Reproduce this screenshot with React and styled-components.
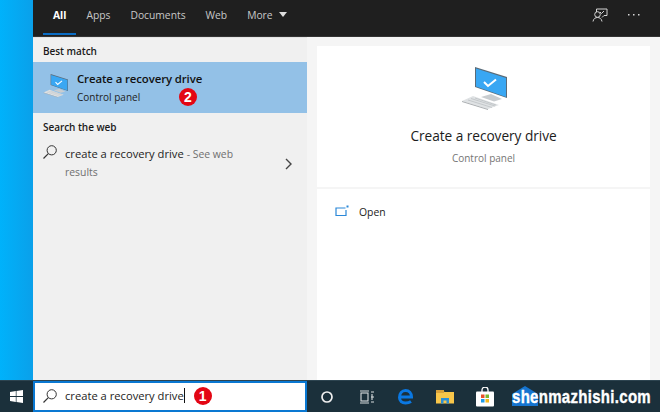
import React from "react";
import styled, { createGlobalStyle } from "styled-components";

const Global = createGlobalStyle`
  html, body { margin: 0; padding: 0; }
  body { font-family: "Open Sans", "Noto Sans", sans-serif; }
  * { box-sizing: border-box; }
`;

const Page = styled.div`
  width: 660px; height: 412px; overflow: hidden;
  display: flex; flex-direction: column;
`;
const Upper = styled.div`
  flex: 1; min-height: 0; display: flex;
`;
const Wallpaper = styled.div`
  width: 33px; background: linear-gradient(90deg, #00b2fb, #0aa0ea);
`;
const Flyout = styled.div`
  flex: 1; display: flex; flex-direction: column; min-width: 0;
`;
const TopBar = styled.div`
  height: 37px; background: #1f1f1f; border-bottom: 1px solid #333;
  display: flex; align-items: stretch; padding: 0 10px;
`;
const Tab = styled.div`
  position: relative; padding: 0 10px 7px; display: flex; align-items: center; gap: 6px;
  height: 36px;
  font-size: 10.3px;
  color: ${p => (p.$active ? "#fff" : "#c8c8c8")};
  font-weight: ${p => (p.$active ? 700 : 400)};
  &::after {
    content: ""; position: absolute; left: 0; right: 0; bottom: 1px; height: 2px;
    background: ${p => (p.$active ? "#0a6cc4" : "transparent")};
  }
`;
const TopActions = styled.div`
  margin-left: auto; display: flex; align-items: center; gap: 20px; padding: 0 10px 7px 0;
`;
const Body = styled.div`
  flex: 1; min-height: 0; display: flex; background: #f5f5f5;
`;
const ResultsPane = styled.div`
  width: 274px; background: #f0f0f0; display: flex; flex-direction: column;
  border-top: 1px solid #e4e4e4;
`;
const SectionLabel = styled.div`
  height: 24px; padding: 1px 0 0 10px; display: flex; align-items: center;
  font-size: 10px; font-weight: 600; color: #1a1a1a; letter-spacing: -0.05px;
`;
const BestMatch = styled.div`
  height: 51px; background: #93c1e7; display: flex; align-items: center;
  padding-left: 10px; gap: 9px; margin-bottom: 1px;
`;
const BestMatchIcon = styled.div`
  display: flex; margin-bottom: 4px;
`;
const ResultTitle = styled.div`
  font-size: 11.4px; font-weight: 600; color: #111; line-height: 16px; letter-spacing: -0.1px;
`;
const ResultSub = styled.div`
  position: relative; font-size: 10px; color: #222; line-height: 14px; margin-top: 3px;
  display: flex; align-items: center;
`;
const Marker = styled.span`
  width: 18px; height: 18px; border-radius: 50%; background: #e30613; color: #fff;
  display: inline-flex; align-items: center; justify-content: center;
  font: 700 14px "Liberation Sans", sans-serif; flex: none;
`;
const FloatMarker = styled(Marker)`
  position: absolute; left: 102px; top: -2px;
`;
const WebRow = styled.div`
  display: flex; padding: 6px 10px 0 9px; gap: 7px; align-items: flex-start;
`;
const WebText = styled.div`
  width: 190px; font-size: 11.2px; line-height: 17px; color: #222;
  padding-top: 1px;
`;
const Hint = styled.span`
  font-size: 10.4px; color: #6f6f6f;
`;
const Chevron = styled.div`
  margin: 9px 0 0 23px;
`;
const DetailPane = styled.div`
  flex: 1; padding: 9px 10px 0; display: flex; flex-direction: column;
`;
const DetailHead = styled.div`
  height: 141px; background: #fff; display: flex; flex-direction: column; align-items: center;
  padding-top: 19px;
`;
const DetailTitle = styled.div`
  font-size: 13.7px; color: #1c1c1c; line-height: 18px; margin-top: 16px; letter-spacing: -0.05px;
`;
const DetailSub = styled.div`
  font-size: 10px; color: #757575; line-height: 14px; margin-top: 6px;
`;
const DetailActions = styled.div`
  flex: 1; margin-top: 2px; background: #fff; padding: 16px 0 0 18px;
  display: flex; gap: 10px; align-items: flex-start; font-size: 10.4px; color: #222;
  line-height: 14px;
`;
const Taskbar = styled.div`
  height: 32px; background: #1b303b; border-top: 1px solid #2d4450; display: flex; align-items: stretch;
  position: relative;
`;
const StartButton = styled.div`
  width: 33px; display: flex; align-items: center; justify-content: center;
`;
const SearchBox = styled.div`
  width: 274px; background: #fff; border: 2px solid #0a78d2; display: flex; align-items: center;
  padding: 0 0 2px 7px; gap: 7px; font-size: 11.200px; color: #222;
`;
const Caret = styled.span`
  width: 1px; height: 15px; background: #111; margin-left: -7px; flex: none;
`;
const BoxMarker = styled(Marker)`
  margin-left: 2px;
`;
const TrayIcons = styled.div`
  display: flex; align-items: center;
`;
const TraySlot = styled.div`
  width: 39.500px; display: flex; align-items: center; justify-content: center;
`;
const Watermark = styled.div`
  position: absolute; left: 512px; top: 4px; height: 24px; width: 140px;
  font: 700 15px/24px "Liberation Sans", sans-serif; color: #fff; letter-spacing: 0.3px;
  white-space: nowrap;
`;
const WatermarkRoof = styled.svg`
  position: absolute; left: 0; top: 1px; z-index: 0;
`;
const WatermarkText = styled.span`
  position: relative; z-index: 1; display: inline-block; transform: scaleY(1.25);
  -webkit-text-stroke: 0.3px #fff;
`;

const PcIcon = ({ size }) => (
  <svg width={size} height={size} viewBox="0 0 46 46">
    <polygon points="1,36 12,31 38,40 27,44" fill="#dfe2e4" />
    <path d="M7 35 L31 42.500 M10 33.500 L34 41 M14 33 L35 40" stroke="#b9bdc0" strokeWidth="0.700" fill="none" />
    <polygon points="1,36 27,44 27,45 1,37" fill="#a9adb0" />
    <polygon points="20,32 30,29 41,34 33,36.500" fill="#c9cdd0" />
    <polygon points="14,2 46,12 46,33 14,22" fill="#5a6b78" />
    <polygon points="15,3.500 45,13 45,32 15,21.500" fill="#39a7f3" />
    <polyline points="23,17 27,21 35,14.500" fill="none" stroke="#fff" strokeWidth="2" />
  </svg>
);
const Magnifier = ({ color = "#333" }) => (
  <svg width="16" height="16" viewBox="0 0 16 16" fill="none" stroke={color} strokeWidth="1">
    <circle cx="9.700" cy="6.300" r="4.600" />
    <line x1="6.300" y1="9.700" x2="1.500" y2="14.500" strokeWidth="1.200" />
  </svg>
);

export default function App() {
  return (
    <Page>
      <Global />
      <Upper>
        <Wallpaper />
        <Flyout>
          <TopBar>
            <Tab $active>All</Tab>
            <Tab>Apps</Tab>
            <Tab>Documents</Tab>
            <Tab>Web</Tab>
            <Tab>
              More
              <svg width="8" height="5" viewBox="0 0 8 5"><polygon points="0,0 8,0 4,5" fill="#ddd" /></svg>
            </Tab>
            <TopActions>
              <svg width="16" height="14" viewBox="0 0 16 14" fill="none" stroke="#d5d5d5" strokeWidth="1">
                <path d="M4.500 4 V1 H15 V7.500 H12 L10 9.500" />
                <circle cx="5.500" cy="6.500" r="2.800" />
                <path d="M1 13.500 C1.500 10.500 3.500 9.500 5.500 9.500 C7.500 9.500 9.500 10.500 10 13.500" />
                <path d="M8 4 L9.500 5.500 L12 3" />
              </svg>
              <svg width="12" height="2" viewBox="0 0 12 2" fill="#d5d5d5">
                <rect x="0" width="1.500" height="1.500" />
                <rect x="5" width="1.500" height="1.500" />
                <rect x="10" width="1.500" height="1.500" />
              </svg>
            </TopActions>
          </TopBar>
          <Body>
            <ResultsPane>
              <SectionLabel>Best match</SectionLabel>
              <BestMatch>
                <BestMatchIcon>
                  <PcIcon size={25} />
                </BestMatchIcon>
                <div>
                  <ResultTitle>Create a recovery drive</ResultTitle>
                  <ResultSub>
                    Control panel
                    <FloatMarker>2</FloatMarker>
                  </ResultSub>
                </div>
              </BestMatch>
              <SectionLabel>Search the web</SectionLabel>
              <WebRow>
                <Magnifier />
                <WebText>
                  create a recovery drive <Hint>- See web results</Hint>
                </WebText>
                <Chevron>
                  <svg width="7" height="12" viewBox="0 0 7 12" fill="none" stroke="#444" strokeWidth="1.400">
                    <polyline points="1,1 6,6 1,11" />
                  </svg>
                </Chevron>
              </WebRow>
            </ResultsPane>
            <DetailPane>
              <DetailHead>
                <PcIcon size={46} />
                <DetailTitle>Create a recovery drive</DetailTitle>
                <DetailSub>Control panel</DetailSub>
              </DetailHead>
              <DetailActions>
                <svg width="14" height="12" viewBox="0 0 14 12" fill="none" stroke="#2b88d8" strokeWidth="1.200">
                  <path d="M10.500 3 H1 V10.500 H11 V5" />
                  <rect x="11.500" y="0.500" width="2" height="2" fill="#2b88d8" stroke="none" />
                </svg>
                <span>Open</span>
              </DetailActions>
            </DetailPane>
          </Body>
        </Flyout>
      </Upper>
      <Taskbar>
        <StartButton>
          <svg width="13" height="13" viewBox="0 0 13 13" fill="#fff">
            <polygon points="0,2 5.800,1.100 5.800,6.100 0,6.100" />
            <polygon points="6.500,1 13,0 13,6.100 6.500,6.100" />
            <polygon points="0,6.900 5.800,6.900 5.800,11.900 0,11" />
            <polygon points="6.500,6.900 13,6.900 13,13 6.500,12" />
          </svg>
        </StartButton>
        <SearchBox>
          <Magnifier />
          <span>create a recovery drive</span>
          <Caret />
          <BoxMarker>1</BoxMarker>
        </SearchBox>
        <TrayIcons>
          <TraySlot>
            <svg width="14" height="14" viewBox="0 0 14 14" fill="none" stroke="#f0f0f0" strokeWidth="1.700">
              <circle cx="7" cy="7" r="5" />
            </svg>
          </TraySlot>
          <TraySlot>
            <svg width="15" height="14" viewBox="0 0 15 14" fill="none" stroke="#d8dcde" strokeWidth="1.100">
              <rect x="2" y="3" width="7" height="8" />
              <path d="M1 1 H10 M1 13 H10 M12 2 H15 M12 7 H15 M12 12 H15 M13 4 V10" />
            </svg>
          </TraySlot>
          <TraySlot>
            <svg width="17" height="17" viewBox="0 0 17 17" fill="none" stroke="#0a78e2" strokeWidth="3">
              <path d="M2.500 9 H14.500 C14.500 5 12 2.500 8.500 2.500 C5 2.500 2.500 5.500 2.500 9.500 C2.500 13 5 15 8.500 15 C10.500 15 12.500 14.500 14 13.500" />
            </svg>
          </TraySlot>
          <TraySlot>
            <svg width="19" height="16" viewBox="0 0 19 16">
              <path d="M0 1 H7 L8.500 3 H18 V14.500 H0 Z" fill="#f8c64a" />
              <rect x="0" y="1" width="8" height="3" fill="#d9a13a" />
              <path d="M5 14.500 V9 H13 V14.500 H10.500 V11.500 H7.500 V14.500 Z" fill="#2a8fd8" />
            </svg>
          </TraySlot>
          <TraySlot>
            <svg width="20" height="20" viewBox="0 0 20 20">
              <path d="M7 5 V3 A3 3 0 0 1 13 3 V5" fill="none" stroke="#fff" strokeWidth="1.300" />
              <rect x="1" y="4.500" width="18" height="15" rx="1" fill="#fff" />
              <rect x="6" y="7.500" width="3.500" height="3.500" fill="#e8512a" />
              <rect x="10.500" y="7.500" width="3.500" height="3.500" fill="#7cb82f" />
              <rect x="6" y="12" width="3.500" height="3.500" fill="#1e9be8" />
              <rect x="10.500" y="12" width="3.500" height="3.500" fill="#f5b81c" />
            </svg>
          </TraySlot>
        </TrayIcons>
        <Watermark>
          <WatermarkRoof width="26" height="20" viewBox="0 0 26 20">
            <polygon points="0,8 13,0 26,8 26,20 0,20" fill="#1574cf" />
          </WatermarkRoof>
          <WatermarkText>shenmazhishi.com</WatermarkText>
        </Watermark>
      </Taskbar>
    </Page>
  );
}
